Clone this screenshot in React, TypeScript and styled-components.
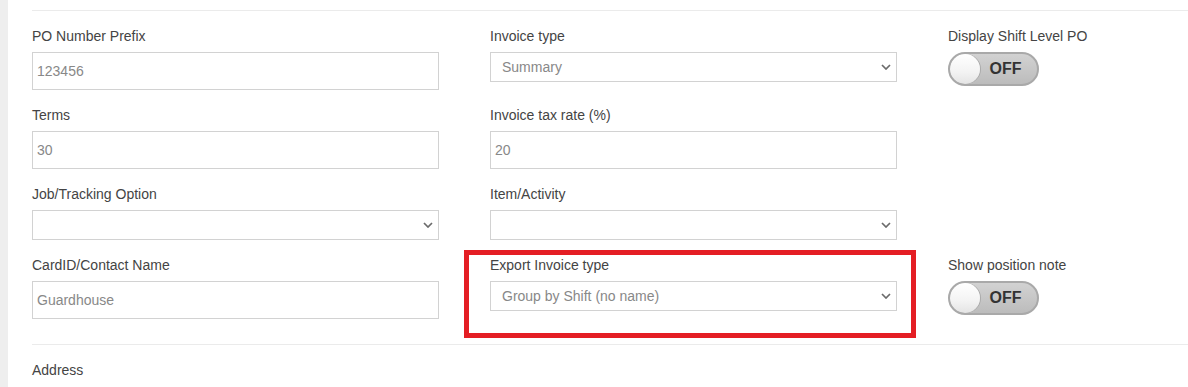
import React from 'react';
import styled, { createGlobalStyle } from 'styled-components';

const GlobalStyle = createGlobalStyle`
  html, body {
    margin: 0;
    padding: 0;
    background: #fff;
    font-family: "Liberation Sans", Arial, Helvetica, sans-serif;
  }
  * { box-sizing: border-box; }
`;

const Page = styled.div`
  display: flex;
  height: 387px;
  overflow: hidden;
`;

const Strip = styled.div`
  width: 8px;
  flex-shrink: 0;
  background: #eeeeee;
`;

const Main = styled.div`
  flex: 1;
  padding: 10px 0 0 24px;
`;

const Divider = styled.div<{ gap?: number }>`
  height: 1px;
  background: #ebebeb;
  margin-top: ${(p) => p.gap || 0}px;
`;

const Section = styled.div`
  padding-top: 15px;
  display: grid;
  grid-template-columns: 407px 407px 1fr;
  column-gap: 51px;
  align-items: start;
`;

const Field = styled.div<{ marked?: boolean }>`
  position: relative;
  margin-bottom: 15px;
  &::after {
    content: '';
    display: ${(p) => (p.marked ? 'block' : 'none')};
    position: absolute;
    top: -5px;
    left: -26px;
    right: -19px;
    bottom: -27px;
    border: 5px solid #e41e24;
    pointer-events: none;
  }
`;

const Label = styled.div`
  font-size: 14px;
  line-height: 20px;
  color: #444;
  margin-bottom: 6px;
`;

const Input = styled.input`
  display: block;
  width: 100%;
  height: 38px;
  border: 1px solid #d2d2d2;
  border-radius: 0;
  padding: 0 4px;
  font-family: inherit;
  font-size: 14px;
  color: #888;
  outline: none;
`;

const SelectBox = styled.div`
  display: flex;
  align-items: center;
  justify-content: space-between;
  height: 30px;
  border: 1px solid #d2d2d2;
  padding: 0 5px 0 11px;
  font-size: 14px;
  color: #888;
`;

const Toggle = styled.div`
  display: flex;
  align-items: center;
  width: 91px;
  height: 34px;
  border: 2px solid #a9a9a9;
  border-radius: 17px;
  background: linear-gradient(to bottom, #d2d2d2 0%, #c6c6c6 55%, #bcbcbc 100%);
  overflow: hidden;
`;

const Knob = styled.div`
  width: 30px;
  height: 30px;
  flex-shrink: 0;
  border-radius: 50%;
  background: linear-gradient(to bottom, #ffffff 0%, #f3f3f3 60%, #e4e4e4 100%);
  box-shadow: 1px 0 0 #a9a9a9;
`;

const ToggleText = styled.span`
  flex: 1;
  text-align: center;
  padding-right: 6px;
  font-size: 16px;
  font-weight: bold;
  color: #333;
`;

const Chevron = () => (
  <svg width="10" height="6" viewBox="0 0 10 6">
    <polyline points="1,1 5,5 9,1" fill="none" stroke="#6b6b6b" strokeWidth="1.7" />
  </svg>
);

const Select: React.FC<{ value?: string }> = ({ value }) => (
  <SelectBox>
    <span>{value}</span>
    <Chevron />
  </SelectBox>
);

const Switch: React.FC = () => (
  <Toggle>
    <Knob />
    <ToggleText>OFF</ToggleText>
  </Toggle>
);

const Empty = styled.div``;

const App: React.FC = () => {
  return (
    <Page>
      <GlobalStyle />
      <Strip />
      <Main>
        <Divider />
        <Section>
          <Field>
            <Label>PO Number Prefix</Label>
            <Input defaultValue="123456" />
          </Field>
          <Field>
            <Label>Invoice type</Label>
            <Select value="Summary" />
          </Field>
          <Field>
            <Label>Display Shift Level PO</Label>
            <Switch />
          </Field>

          <Field>
            <Label>Terms</Label>
            <Input defaultValue="30" />
          </Field>
          <Field>
            <Label>Invoice tax rate (%)</Label>
            <Input defaultValue="20" />
          </Field>
          <Empty />

          <Field>
            <Label>Job/Tracking Option</Label>
            <Select />
          </Field>
          <Field>
            <Label>Item/Activity</Label>
            <Select />
          </Field>
          <Empty />

          <Field>
            <Label>CardID/Contact Name</Label>
            <Input defaultValue="Guardhouse" />
          </Field>
          <Field marked>
            <Label>Export Invoice type</Label>
            <Select value="Group by Shift (no name)" />
          </Field>
          <Field>
            <Label>Show position note</Label>
            <Switch />
          </Field>
        </Section>
        <Divider gap={10} />
        <Section>
          <Field>
            <Label>Address</Label>
          </Field>
        </Section>
      </Main>
    </Page>
  );
};

export default App;
